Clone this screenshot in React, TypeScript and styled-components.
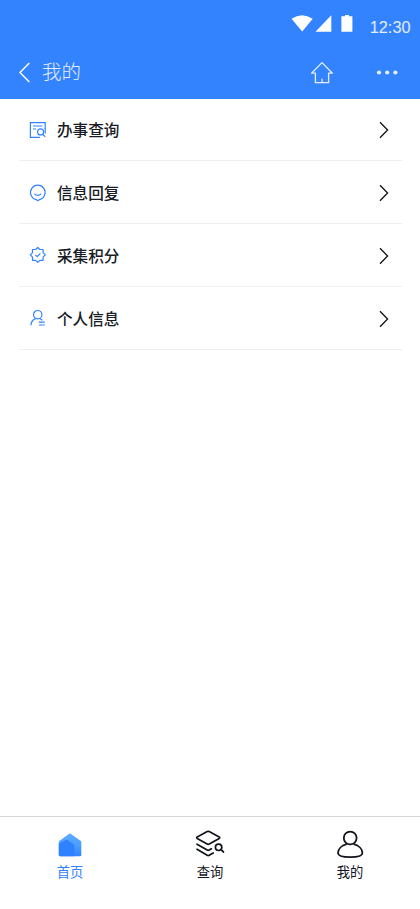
import React from 'react';
import styled, { createGlobalStyle } from 'styled-components';

const GlobalStyle = createGlobalStyle`
  * { box-sizing: border-box; }
  body {
    margin: 0;
    background: #fff;
    font-family: 'Noto Sans CJK SC', 'Liberation Sans', sans-serif;
  }
`;

const Screen = styled.div`
  display: flex;
  flex-direction: column;
  width: 420px;
  height: 909px;
  background: #fff;
`;

const Header = styled.header`
  height: 98.5px;
  background: #3383ff;
  color: #fff;
`;

const StatusBar = styled.div`
  display: flex;
  align-items: flex-start;
  justify-content: flex-end;
  height: 46px;
  padding: 14px 9.5px 0 0;
`;

const Time = styled.span`
  margin: 3px 0 0 17px;
  font: 16.3px/20px 'Liberation Sans', sans-serif;
  color: #e4eeff;
`;

const NavBar = styled.div`
  display: flex;
  align-items: center;
  height: 52px;
  padding: 0 21px 0 18px;
`;

const Title = styled.h1`
  flex: 1;
  margin: -2px 0 0 10px;
  font-size: 19.5px;
  line-height: 28px;
  font-weight: 300;
  color: #e4eeff;
`;

const Icon = styled.svg`
  display: block;
  flex: none;
  overflow: visible;
  fill: none;
  stroke: currentColor;
`;

const HomeButton = styled.div`
  margin-right: 42px;
  color: #e4eeff;
`;

const List = styled.main`
  flex: 1;
  padding: 0 18px 0 19px;
`;

const Row = styled.div`
  display: flex;
  align-items: center;
  height: 62.75px;
  padding: 1px 13px 0 9px;
  border-bottom: 1px solid #efeff0;
  color: #3383ff;
`;

const RowLabel = styled.span`
  flex: 1;
  margin: -1px 0 0 9px;
  font-size: 15.6px;
  line-height: 24px;
  font-weight: 500;
  color: #191c26;
`;

const Chevron = styled(Icon)`
  margin-top: 1px;
  color: #111;
`;

const TabBar = styled.nav`
  display: grid;
  grid-template-columns: repeat(3, 1fr);
  height: 93px;
  border-top: 1px solid #d8d8d8;
`;

const Tab = styled.div<{ $active?: boolean }>`
  display: flex;
  flex-direction: column;
  align-items: center;
  padding-top: 12px;
  color: ${({ $active }) => ($active ? '#3383ff' : '#11141d')};
`;

const TabLabel = styled.span`
  margin-top: 3px;
  font-size: 13.3px;
  line-height: 20px;
`;

const SearchDocIcon = () => (
  <Icon width="20" height="20" strokeWidth="1.2">
    <path d="M17.2 9V2.6H2.4v14.7h9.5M5 6h9.5M5 9h3.2" />
    <circle cx="12.6" cy="11.9" r="3" />
    <path d="m14.6 14.2 2.6 2.6M17.2 8v5.5" />
  </Icon>
);

const SmileIcon = () => (
  <Icon width="20" height="20" strokeWidth="1.2">
    <path d="M8.1 16.6A7.3 7.3 0 1 1 11.5 16.6L9.8 17.7Z" strokeLinejoin="round" />
    <path d="M6.3 10.9q3.5 2.8 7 0" />
  </Icon>
);

const BadgeIcon = () => (
  <Icon width="20" height="20" strokeWidth="1.2" strokeLinejoin="round">
    <path d="m9.8 2.5 2.1 2h3.2v3.2l2.1 2.2-2.1 2.2v3.2h-3.2l-2.1 2.1-2.1-2.1H4.5v-3.2L2.4 9.9l2.1-2.2V4.5h3.2Z" />
    <path d="m7.3 9.8 1.8 1.8 3.3-3.3" />
  </Icon>
);

const ProfileIcon = () => (
  <Icon width="20" height="20" strokeWidth="1.2">
    <circle cx="9.7" cy="6.7" r="4.2" />
    <path d="M3 17.3c0-3.4 2-5.6 4.6-6.7M11.9 10.6l2.4 1.7M10.8 14.2h6M10.8 17h6" />
  </Icon>
);

const rows = [
  { label: '办事查询', Glyph: SearchDocIcon },
  { label: '信息回复', Glyph: SmileIcon },
  { label: '采集积分', Glyph: BadgeIcon },
  { label: '个人信息', Glyph: ProfileIcon },
];

const HomeTabIcon = () => (
  <Icon width="30" height="30" stroke="none">
    <defs>
      <linearGradient id="house" x1="0" y1="0" x2="0" y2="1">
        <stop offset="0" stopColor="#5cacff" />
        <stop offset="0.5" stopColor="#4d9fff" />
        <stop offset="1" stopColor="#3383ff" />
      </linearGradient>
    </defs>
    <path d="M14.2 4.8q.8-.6 1.6 0l10 7.3q.5.4.5 1v12.8q0 1.4-1.4 1.4H5.2q-1.4 0-1.4-1.4V13.1q0-.6.5-1Z" fill="url(#house)" stroke="none" />
    <path d="M3.8 14.8 10.6 11q.9-.5 1.8 0l6.2 4.3q.8.6.8 1.6v10.4H5.2q-1.4 0-1.4-1.4Z" fill="#3081ff" stroke="none" />
  </Icon>
);

const LayersIcon = () => (
  <Icon width="30" height="30" strokeWidth="1.7" strokeLinejoin="round" strokeLinecap="round">
    <path d="M12.2 2.6Q13.2 2.1 14.2 2.6L24.2 8q1.1.7 0 1.4l-10 5.7q-1 .6-2 0L2.2 9.4q-1.1-.7 0-1.4ZM2 15.2l10.2 5.9q1 .6 2 0l2.2-1.3M2 20.3l10.2 6q1 .6 2 0l4-2.4" />
    <circle cx="23.6" cy="18.3" r="3.2" />
    <path d="m26 20.7 2.5 2.3" />
  </Icon>
);

const PersonIcon = () => (
  <Icon width="30" height="30" strokeWidth="1.8">
    <circle cx="15.2" cy="9" r="6.4" />
    <path d="M11.7 15.2C6.1 16.7 3 20.5 3 24q0 4.2 12.2 4.2T27.4 24c0-3.5-3.1-7.3-8.7-8.8" />
  </Icon>
);

export default function App() {
  return (
    <>
      <GlobalStyle />
      <Screen>
        <Header>
          <StatusBar>
            <Icon width="62" height="18">
              <g fill="#fff" stroke="none">
                <path d="M.5 4.8Q11 -2.5 21.7 4.8L11.2 17.6Z" />
                <path d="M24.5 17.8 40.3 1.3v16.5Z" />
                <path d="M50.4 2.3h3.7V1h3.8v1.3h3.5v15.5h-11Z" />
              </g>
            </Icon>
            <Time>12:30</Time>
          </StatusBar>
          <NavBar>
            <Icon width="14" height="22" strokeWidth="1.4">
              <path d="M11.3 2 2 11.5l9.3 9.5" />
            </Icon>
            <Title>我的</Title>
            <HomeButton>
              <Icon width="24" height="24" strokeWidth="1.3" strokeLinejoin="round">
                <path d="M12 2.6 1.6 13.2h3.8v9.5h13.2v-9.5h3.8ZM12 22.7v-4" />
              </Icon>
            </HomeButton>
            <Icon width="23" height="8">
              <g fill="#e4eeff" stroke="none">
                <circle cx="3" cy="4.5" r="2.1" />
                <circle cx="11.2" cy="4.5" r="2.1" />
                <circle cx="19.4" cy="4.5" r="2.1" />
              </g>
            </Icon>
          </NavBar>
        </Header>
        <List>
          {rows.map(({ label, Glyph }) => (
            <Row key={label}>
              <Glyph />
              <RowLabel>{label}</RowLabel>
              <Chevron width="10" height="18" strokeWidth="1.3">
                <path d="m1 1.2 7.6 7.8L1 16.8" />
              </Chevron>
            </Row>
          ))}
        </List>
        <TabBar>
          <Tab $active>
            <HomeTabIcon />
            <TabLabel>首页</TabLabel>
          </Tab>
          <Tab>
            <LayersIcon />
            <TabLabel>查询</TabLabel>
          </Tab>
          <Tab>
            <PersonIcon />
            <TabLabel>我的</TabLabel>
          </Tab>
        </TabBar>
      </Screen>
    </>
  );
}
